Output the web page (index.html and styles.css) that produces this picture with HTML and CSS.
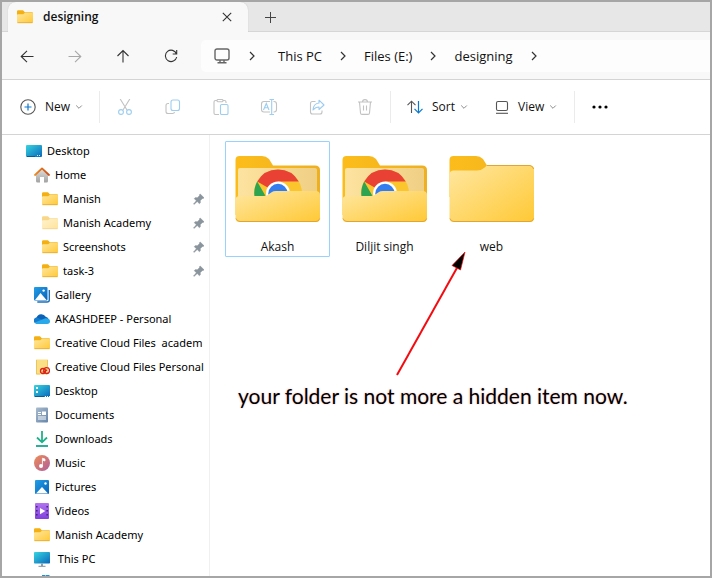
FILE: index.html
```html
<!DOCTYPE html>
<html lang="en">
<head>
<meta charset="utf-8">
<meta name="viewport" content="width=device-width, initial-scale=1">
<title>designing</title>
<link rel="stylesheet" href="styles.css">
</head>
<body>
<svg class="sprite" aria-hidden="true">
  <defs>
    <linearGradient id="yellow" x1="0" y1="0" x2="1" y2="1"><stop offset="0" stop-color="#ffe7a1"/><stop offset="1" stop-color="#ffc935"/></linearGradient>
    <linearGradient id="inside" x1="0" y1="0" x2="1" y2="0"><stop offset="0" stop-color="#fde3a0"/><stop offset="1" stop-color="#efcf84"/></linearGradient>
    <linearGradient id="back" x1="0" y1="0" x2="1" y2="0"><stop offset="0" stop-color="#fcbd1b"/><stop offset="1" stop-color="#eeb021"/></linearGradient>
    <linearGradient id="screen" x1="0" y1="0" x2="1" y2="1"><stop offset="0" stop-color="#35d6e0"/><stop offset="1" stop-color="#0a68ba"/></linearGradient>
    <linearGradient id="blue" x1="0" y1="0" x2="1" y2="1"><stop offset="0" stop-color="#229fe8"/><stop offset="1" stop-color="#0862b8"/></linearGradient>
    <linearGradient id="wall" x1="0" y1="0" x2="0" y2="1"><stop offset="0" stop-color="#e2e2e2"/><stop offset="1" stop-color="#a2a2a2"/></linearGradient>
    <linearGradient id="roof" x1="0" y1="0" x2="1" y2="0"><stop offset="0" stop-color="#f08a1d"/><stop offset="1" stop-color="#cb4d1a"/></linearGradient>
    <linearGradient id="paper" x1="0" y1="0" x2="1" y2="1"><stop offset="0" stop-color="#a9bbcd"/><stop offset="1" stop-color="#6585ab"/></linearGradient>
    <linearGradient id="disc" x1="0" y1="0" x2="1" y2="1"><stop offset="0" stop-color="#ef8d54"/><stop offset="1" stop-color="#ae5c9e"/></linearGradient>
    <linearGradient id="film" x1="0" y1="0" x2="0" y2="1"><stop offset="0" stop-color="#b173f0"/><stop offset="1" stop-color="#813fdc"/></linearGradient>

    <symbol id="i-folder" viewBox="0 0 16 16">
      <path d="M0 2.5Q0 1.2 1.2 1.2H6L7.8 3.2H15Q16 3.2 16 4.2V7H0Z" fill="#f4b013"/>
      <path d="M0 6Q0 5.2 1 5.2H6.2L8 3.8H15Q16 3.8 16 4.8V13Q16 14 15 14H1Q0 14 0 13Z" fill="url(#yellow)"/>
      <path d="M.5 13.7H15.5" stroke="#e3a62c" stroke-width=".8"/>
    </symbol>
    <symbol id="i-desktop" viewBox="0 0 16 16"><rect y="2" width="16" height="12" rx="1" fill="url(#screen)"/><path d="M1 13.5H9" stroke="#0d5a91"/><path d="M11 12.5H15" stroke="#c6edfa" stroke-dasharray="1 1"/></symbol>
    <symbol id="i-desktop2" viewBox="0 0 16 16"><rect y="2" width="16" height="12" rx="1" fill="url(#screen)"/><path d="M1 13.5H10" stroke="#0d5a91"/><path d="M11 13.5H16" stroke="#fff" stroke-dasharray="1 1"/><path d="M2 4h2v2H2zM2 8h2v2H2z" fill="#fff"/></symbol>
    <symbol id="i-home" viewBox="0 0 16 16"><path d="M2 7L8 1.5L14 7V14Q14 15.5 12.5 15.5H10V10H6V15.5H3.5Q2 15.5 2 14Z" fill="url(#wall)"/><path d="M1 8L8 1.4L15 8" fill="none" stroke="url(#roof)" stroke-width="1.8" stroke-linecap="round" stroke-linejoin="round"/></symbol>
    <symbol id="i-pin" viewBox="0 0 12 12"><path d="M7.2 1L11 4.8L10 5.6L9.4 5.4L7.3 7.6L7.2 10L6.3 10.6L4.2 8.5L1 11.4L.6 11L3.4 7.8L1.4 5.7L2 4.8L4.5 4.7L6.6 2.6L6.4 1.9Z" fill="#8a949c" stroke="#8a949c" stroke-width=".6"/></symbol>
    <symbol id="i-gallery" viewBox="0 0 16 16"><path d="M4 14.3V15H13Q15.3 15 15.3 13V3" fill="none" stroke="#1c70b8" stroke-width="1.4"/><rect y="0" width="13.5" height="13.5" rx="1" fill="url(#blue)"/><path d="M1 13L6.5 6L12.5 13Z" fill="#fff"/><circle cx="9.6" cy="3.6" r="1.2" fill="#fff"/></symbol>
    <symbol id="i-cloud" viewBox="0 0 16 16"><path d="M3 12.5A3 3 0 0 1 2.6 6.6A5 5 0 0 1 11.7 5.8A3.6 3.6 0 0 1 13 12.5Z" fill="#0c62b8"/><path d="M5.5 13L1.5 12.3A3 3 0 0 1 3 6.6L9 9Z" fill="#157bcd"/><path d="M3 13Q1.5 13 .8 11.6L11.3 7.2Q16 7 16 10.3Q16 13 13 13Z" fill="#29a8ea"/></symbol>
    <symbol id="i-cc" viewBox="0 0 16 16"><rect x="2" y=".5" width="12" height="15" fill="#fbdf87"/><path d="M2.5 1V15H6M13.5 1V8" fill="none" stroke="#e9bd53" stroke-width=".8"/><g fill="none" stroke="#d92319" stroke-width="1.3"><circle cx="9" cy="12" r="2.5"/><circle cx="12.6" cy="11.6" r="2.9"/><path d="M8.6 12.8L10.6 12.6L13.2 10.8"/></g></symbol>
    <symbol id="i-doc" viewBox="0 0 16 16"><rect x="2" y=".5" width="12" height="15" rx="1" fill="url(#paper)"/><path d="M4 5.5H7M4 7.5H7M4 10H12M4 12H12" stroke="#fff"/><rect x="8" y="4.5" width="4" height="3.5" fill="#fff"/></symbol>
    <symbol id="i-down" viewBox="0 0 16 16"><path d="M8 0V11M3 6.5L8 11.3L13 6.5" fill="none" stroke="#20b18b" stroke-width="1.8"/><path d="M2 15H14" stroke="#16a58f" stroke-width="1.8"/></symbol>
    <symbol id="i-music" viewBox="0 0 16 16"><circle cx="8" cy="8" r="8" fill="url(#disc)"/><path d="M8.4 11V3.2L11 4V6L9 5.4" fill="#fff" stroke="#fff" stroke-width=".7"/><circle cx="7" cy="11" r="2" fill="#fff"/></symbol>
    <symbol id="i-pic" viewBox="0 0 16 16"><rect x="1" y="1" width="14" height="14" rx="1" fill="url(#blue)"/><path d="M2 14.5L8 8L14 14.5Z" fill="#fff"/><circle cx="11.5" cy="4.5" r="1.2" fill="#fff"/></symbol>
    <symbol id="i-video" viewBox="0 0 16 16"><rect x="1" y="0" width="14" height="16" rx="1" fill="url(#film)"/><path d="M2 3h1.6v1.6H2zM2 7h1.6v1.6H2zM2 11h1.6v1.6H2zM12.4 3H14v1.6h-1.6zM12.4 7H14v1.6h-1.6zM12.4 11H14v1.6h-1.6z" fill="#49238b"/><path d="M6 5L11.3 8L6 11.3Z" fill="#fff"/></symbol>
    <symbol id="i-pc" viewBox="0 0 16 16"><rect x="0" y="1" width="16" height="11.5" rx=".8" fill="url(#screen)"/><path d="M7 12.5H9V15H7Z" fill="#8aa0b0"/><path d="M4.5 15.3H11.5" stroke="#78909e"/></symbol>
    <symbol id="i-drive" viewBox="0 0 16 16"><path d="M8 0h3.5v3H8zM12 0h3.5v3H12z" fill="#1e92d6"/><path d="M1 5.5H15V11H1Z" fill="#9aa2a8"/></symbol>
    <symbol id="i-right" viewBox="0 0 8 12"><path d="M2 2L6 6L2 10" fill="none" stroke="#333" stroke-width="1.2"/></symbol>
    <symbol id="i-caret" viewBox="0 0 8 8"><path d="M1.2 2.5L4 5.3L6.8 2.5" fill="none" stroke="#8c8c8c"/></symbol>
    <symbol id="i-bigfolder" viewBox="0 0 86 68">
      <path d="M.5 5Q.5 1 4.5 1H27Q31 1 34 4L38 10.4H80Q85 10.4 85 15V42H.5Z" fill="url(#back)"/>
      <path d="M.5 19.5Q.5 15.5 5 15.5H28Q32 15.5 35 13L38 10.4H80.5Q85 10.4 85 15V63Q85 67 81 67H4.5Q.5 67 .5 63Z" fill="url(#yellow)"/>
      <path d="M1 63.5Q2 66.5 5 66.5H81Q84 66.5 84.6 63.5M38 10.5H81Q84 11 84.6 14" fill="none" stroke="#e1a536"/>
    </symbol>
    <symbol id="i-chromefolder" viewBox="0 0 86 68">
      <path d="M.5 5Q.5 1 4.5 1H27Q31 1 34 4L38 10.4H80Q85 10.4 85 15V60H.5Z" fill="url(#back)"/>
      <path d="M3 43V15Q3 13 5 13H80Q82 13 82 15V43Z" fill="url(#inside)"/>
      <circle cx="43" cy="38.5" r="24" fill="#fbc52d"/>
      <path d="M43 38.5L22.2 26.5A24 24 0 0 1 63.8 26.5H43Z" fill="#e94234"/>
      <path d="M22.2 26.5L34 47L43 62A24 24 0 0 1 22.2 26.5Z" fill="#2da450"/>
      <circle cx="43" cy="38.5" r="12" fill="#fff"/><circle cx="43" cy="38.5" r="9.7" fill="#337df0"/>
      <path d="M.5 45Q.5 41 5 41H29Q32 41 34 39L37 37Q38 36 41 36H80.5Q85 36 85 40V63Q85 67 81 67H4.5Q.5 67 .5 63Z" fill="url(#yellow)"/>
      <path d="M1 63.5Q2 66.5 5 66.5H81Q84 66.5 84.6 63.5" fill="none" stroke="#e1a536"/>
    </symbol>
  </defs>
</svg>

<div class="window">
  <header class="tabs">
    <div class="tab">
      <svg class="icon" aria-hidden="true"><use href="#i-folder"/></svg>
      <span class="tab-title">designing</span>
      <button class="tab-close" aria-label="Close tab"><svg width="10" height="10" viewBox="0 0 10 10"><path d="M.8.8L9.2 9.2M9.2.8L.8 9.2" stroke="#333" stroke-width="1.1"/></svg></button>
    </div>
    <button class="tab-new" aria-label="New tab"><svg width="11" height="11" viewBox="0 0 11 11"><path d="M5.5 0V11M0 5.5H11" stroke="#444"/></svg></button>
  </header>

  <nav class="navbar" aria-label="Navigation">
    <button class="tool" aria-label="Back"><svg width="14" height="14" viewBox="0 0 14 14"><path d="M13.5 7.5H1M7 1.8L1.2 7.5L7 13.2" class="line dark"/></svg></button>
    <button class="tool" aria-label="Forward"><svg width="14" height="14" viewBox="0 0 14 14"><path d="M.5 7.5H13M7 1.8L12.8 7.5L7 13.2" class="line pale"/></svg></button>
    <button class="tool" aria-label="Up"><svg width="14" height="14" viewBox="0 0 14 14"><path d="M7 13.5V1.5M1.5 7L7 1.5L12.5 7" class="line dark"/></svg></button>
    <button class="tool" aria-label="Refresh"><svg width="14" height="14" viewBox="0 0 14 14"><path d="M12.5 5A5.7 5.7 0 1 0 12.7 8M12.7 1V5H8.7" class="line dark"/></svg></button>
    <div class="address">
      <svg width="16" height="16" viewBox="0 0 16 16" aria-hidden="true"><rect x="1" y="1" width="14" height="11" rx="2" class="line monitor"/><path d="M6 12V14.5M10 12V14.5M3.5 14.8H12.5" class="line monitor"/></svg>
      <svg class="crumb-sep wide" aria-hidden="true"><use href="#i-right"/></svg>
      <a href="#pc">This PC</a>
      <svg class="crumb-sep" aria-hidden="true"><use href="#i-right"/></svg>
      <a href="#files">Files (E:)</a>
      <svg class="crumb-sep" aria-hidden="true"><use href="#i-right"/></svg>
      <a href="#designing">designing</a>
      <svg class="crumb-sep" aria-hidden="true"><use href="#i-right"/></svg>
    </div>
  </nav>

  <div class="toolbar" role="toolbar" aria-label="Commands">
    <button class="command new"><svg width="16" height="16" viewBox="0 0 16 16"><circle cx="8" cy="8" r="7.2" class="line grey"/><path d="M8 4.5V11.5M4.5 8H11.5" stroke="#0b78cf" stroke-width="1.2"/></svg>New<svg class="caret"><use href="#i-caret"/></svg></button>
    <span class="divider"></span>
    <button class="tool" aria-label="Cut" disabled><svg width="16" height="16" viewBox="0 0 16 16"><path d="M3.2 0L10 11M12.8 0L6 11" class="line off"/><circle cx="4" cy="13" r="2.4" class="line sky"/><circle cx="12" cy="13" r="2.4" class="line sky"/></svg></button>
    <button class="tool" aria-label="Copy" disabled><svg width="16" height="16" viewBox="0 0 16 16"><path d="M4 4.5H3Q1 4.5 1 6.5V12.5Q1 14.5 3 14.5H7.5Q9.3 14.5 9.5 13" class="line off"/><rect x="6" y="1" width="8.5" height="10.5" rx="2" class="line sky"/></svg></button>
    <button class="tool" aria-label="Paste" disabled><svg width="16" height="16" viewBox="0 0 16 16"><path d="M6 15.5H2.5Q1 15.5 1 14V3Q1 1.5 2.5 1.5H4M10 1.5H11.5Q13 1.5 13 3V4" class="line off"/><rect x="4" y=".5" width="6" height="2.3" rx="1.1" class="line off"/><rect x="7.5" y="5.5" width="7.5" height="10" rx="1.3" class="line sky"/></svg></button>
    <button class="tool" aria-label="Rename" disabled><svg width="18" height="16" viewBox="0 0 18 16"><path d="M10 13H4Q1.5 13 1.5 10.5V5Q1.5 2.5 4 2.5H10M13.5 2.5H14Q16.5 2.5 16.5 5V10.5Q16.5 13 14 13H13.5" class="line off"/><path d="M9.5 .5H14M9.5 15.5H14M11.7 .5V15.5M3.5 11L6.3 4.5L9 11M4.5 8.7H8" class="line sky"/></svg></button>
    <button class="tool" aria-label="Share" disabled><svg width="16" height="16" viewBox="0 0 16 16"><path d="M6.5 2.5H3.5Q1.5 2.5 1.5 4.5V13Q1.5 15 3.5 15H11Q13 15 13 13V11.5" class="line off"/><path d="M10 1.2L15 6L10 10.5V8Q6.5 8 4 11Q4.5 4.5 10 4Z" class="line sky" stroke-linejoin="round"/></svg></button>
    <button class="tool" aria-label="Delete" disabled><svg width="16" height="16" viewBox="0 0 16 16"><path d="M1 3H15M5.5 3Q5.5 .6 8 .6Q10.5 .6 10.5 3M2.5 3L3.5 14Q3.6 15.4 5 15.4H11Q12.4 15.4 12.5 14L13.5 3M6.5 6.5V11.5M9.5 6.5V11.5" class="line off"/></svg></button>
    <span class="divider"></span>
    <button class="command sort"><svg width="16" height="14" viewBox="0 0 16 14"><path d="M4.5 13V1.2M.5 5.2L4.5 1.2L8.5 5.2" class="line grey"/><path d="M11.5 1V12.8M7.5 8.8L11.5 12.8L15.5 8.8" stroke="#0b78cf" fill="none" stroke-width="1.2"/></svg>Sort<svg class="caret"><use href="#i-caret"/></svg></button>
    <button class="command view"><svg width="14" height="14" viewBox="0 0 14 14"><rect x="1.5" y="1.5" width="11" height="9" rx="1.5" class="line grey"/><path d="M1 13.3H13" class="line grey"/></svg>View<svg class="caret"><use href="#i-caret"/></svg></button>
    <span class="divider"></span>
    <button class="tool" aria-label="More"><svg width="18" height="4" viewBox="0 0 18 4"><circle cx="3" cy="2" r="1.6"/><circle cx="9" cy="2" r="1.6"/><circle cx="15" cy="2" r="1.6"/></svg></button>
  </div>

  <div class="body">
    <aside class="sidebar">
      <ul>
        <li><a class="row" href="#desktop"><svg class="icon"><use href="#i-desktop"/></svg><span class="name">Desktop</span></a></li>
        <li><a class="row level-1" href="#home"><svg class="icon"><use href="#i-home"/></svg><span class="name">Home</span></a></li>
        <li><a class="row level-2" href="#m"><svg class="icon"><use href="#i-folder"/></svg><span class="name">Manish</span><svg class="pin"><use href="#i-pin"/></svg></a></li>
        <li><a class="row level-2" href="#ma"><svg class="icon faded"><use href="#i-folder"/></svg><span class="name">Manish Academy</span><svg class="pin"><use href="#i-pin"/></svg></a></li>
        <li><a class="row level-2" href="#s"><svg class="icon"><use href="#i-folder"/></svg><span class="name">Screenshots</span><svg class="pin"><use href="#i-pin"/></svg></a></li>
        <li><a class="row level-2" href="#t"><svg class="icon"><use href="#i-folder"/></svg><span class="name">task-3</span><svg class="pin"><use href="#i-pin"/></svg></a></li>
        <li><a class="row level-1" href="#g"><svg class="icon"><use href="#i-gallery"/></svg><span class="name">Gallery</span></a></li>
        <li><a class="row level-1" href="#a"><svg class="icon"><use href="#i-cloud"/></svg><span class="name">AKASHDEEP - Personal</span></a></li>
        <li><a class="row level-1" href="#c1"><svg class="icon"><use href="#i-folder"/></svg><span class="name">Creative Cloud Files  academ</span></a></li>
        <li><a class="row level-1" href="#c2"><svg class="icon"><use href="#i-cc"/></svg><span class="name">Creative Cloud Files Personal</span></a></li>
        <li><a class="row level-1" href="#d"><svg class="icon"><use href="#i-desktop2"/></svg><span class="name">Desktop</span></a></li>
        <li><a class="row level-1" href="#doc"><svg class="icon"><use href="#i-doc"/></svg><span class="name">Documents</span></a></li>
        <li><a class="row level-1" href="#dl"><svg class="icon"><use href="#i-down"/></svg><span class="name">Downloads</span></a></li>
        <li><a class="row level-1" href="#mu"><svg class="icon"><use href="#i-music"/></svg><span class="name">Music</span></a></li>
        <li><a class="row level-1" href="#p"><svg class="icon"><use href="#i-pic"/></svg><span class="name">Pictures</span></a></li>
        <li><a class="row level-1" href="#v"><svg class="icon"><use href="#i-video"/></svg><span class="name">Videos</span></a></li>
        <li><a class="row level-1" href="#ma2"><svg class="icon"><use href="#i-folder"/></svg><span class="name">Manish Academy</span></a></li>
        <li><a class="row level-1" href="#pc"><svg class="icon"><use href="#i-pc"/></svg><span class="name"> This PC</span></a></li>
        <li><a class="row level-1" href="#drive" aria-label="Drive"><svg class="icon"><use href="#i-drive"/></svg></a></li>
      </ul>
    </aside>
    <main class="content">
      <div class="files">
        <button class="file selected"><svg class="thumb"><use href="#i-chromefolder"/></svg><span>Akash</span></button>
        <button class="file"><svg class="thumb"><use href="#i-chromefolder"/></svg><span>Diljit singh</span></button>
        <button class="file"><svg class="thumb"><use href="#i-bigfolder"/></svg><span>web</span></button>
      </div>
      <div class="note">
        <svg class="arrow" width="74" height="126" viewBox="0 0 74 126" aria-hidden="true"><path d="M2 125L63 16" stroke="#f40b10" stroke-width="2"/><path d="M70 2L65.5 20L57 15.5Z" fill="#000" stroke="#f40b10" stroke-width=".7"/></svg>
        <p>your folder is not more a hidden item now.</p>
      </div>
    </main>
  </div>
</div>
</body>
</html>
```
FILE: styles.css
```css
* { box-sizing: border-box; }

body {
  margin: 0;
  font: 12px/16px "Open Sans", "Noto Sans", sans-serif;
  color: #111;
}

button {
  border: 0;
  padding: 0;
  background: none;
  font: inherit;
  color: inherit;
}

a { color: inherit; text-decoration: none; }

svg { display: block; flex: none; }

.sprite { position: absolute; width: 0; height: 0; }

.window {
  display: flex;
  flex-direction: column;
  height: 100vh;
  border: 2px solid #a6a6a6;
  background: #fff;
  overflow: hidden;
}

.icon { width: 16px; height: 16px; }
.faded { opacity: 0.5; }

.line { fill: none; stroke-width: 1.1; }
.dark { stroke: #333; }
.pale { stroke: #a8a8a8; }
.grey { stroke: #555; }
.monitor { stroke: #666; stroke-width: 1.4; }
.off { stroke: #c2c2c2; }
.sky { stroke: #9dcdf0; }

.tabs {
  display: flex;
  flex: none;
  height: 30px;
  padding-left: 6px;
  background: #e7e7e7;
  box-shadow: inset 0 -1px #d6d6d6;
}

.tab {
  display: flex;
  align-items: center;
  gap: 10px;
  width: 240px;
  padding: 0 16px 0 9px;
  border-radius: 8px 8px 0 0;
  background: #f8f8f8;
  box-shadow: 0 0 1px #bbb;
}

.tab-title { flex: 1; font-weight: 600; }

.tab-new { width: 44px; display: grid; place-items: center; }

.navbar {
  display: flex;
  flex: none;
  align-items: center;
  height: 48px;
  padding-left: 1px;
  border-bottom: 1px solid #d4d4d4;
  background: #f8f8f8;
}

.tool {
  display: grid;
  place-items: center;
  flex: none;
  width: 48px;
  height: 32px;
}

.address {
  display: flex;
  flex: 1;
  align-items: center;
  gap: 17px;
  height: 32px;
  margin-left: 6px;
  padding-left: 13px;
  border-radius: 5px 0 0 5px;
  background: #fdfdfd;
  font-size: 13px;
}

.crumb-sep { width: 8px; height: 12px; }
.crumb-sep.wide { margin: 0 5px 0 1px; }

.toolbar {
  display: flex;
  flex: none;
  align-items: center;
  height: 55px;
  border-bottom: 1px solid #d4d4d4;
}

.command {
  display: flex;
  align-items: center;
  gap: 9px;
  height: 32px;
}

.command .caret { width: 8px; height: 8px; margin-left: -4px; }

.new { width: 96px; padding-left: 18px; }
.sort { width: 86px; padding-left: 15px; }
.view { width: 95px; padding-left: 17px; }

.divider { flex: none; width: 1px; height: 32px; margin: 0 1px; background: #ebebeb; }

.body { display: flex; flex: 1; min-height: 0; }

.sidebar {
  flex: none;
  width: 208px;
  padding-top: 4px;
  border-right: 1px solid #f0f0f0;
  font-family: "Noto Sans", sans-serif;
  font-size: 11px;
  color: #000;
  overflow: hidden;
}

.sidebar ul { margin: 0; padding: 0; list-style: none; }

.row {
  display: flex;
  align-items: center;
  gap: 5px;
  height: 24px;
  padding-left: 24px;
}

.row.level-1 { padding-left: 32px; }
.row.level-2 { padding-left: 40px; }

.name { flex: 1; min-width: 0; overflow: hidden; white-space: pre; }

.pin { width: 12px; height: 12px; margin-right: 4px; }

.content { position: relative; flex: 1; min-width: 0; }

.files {
  display: flex;
  flex-wrap: wrap;
  gap: 2px;
  padding: 6px 0 0 15px;
}

.file {
  display: flex;
  flex-direction: column;
  align-items: center;
  gap: 16px;
  width: 105px;
  height: 116px;
  padding-top: 13px;
  border: 1px solid transparent;
}

.file.selected { border-color: #99d1ff; border-radius: 1px; }

.thumb { width: 86px; height: 68px; }

.note { position: absolute; top: 115px; left: 28px; }

.note .arrow { margin-left: 157px; }

.note p {
  margin: 7px 0 0;
  font: 21px/26px Lato, sans-serif;
  color: #000;
  text-shadow: 0 0 2px #f3b6b6;
  white-space: nowrap;
}
```
